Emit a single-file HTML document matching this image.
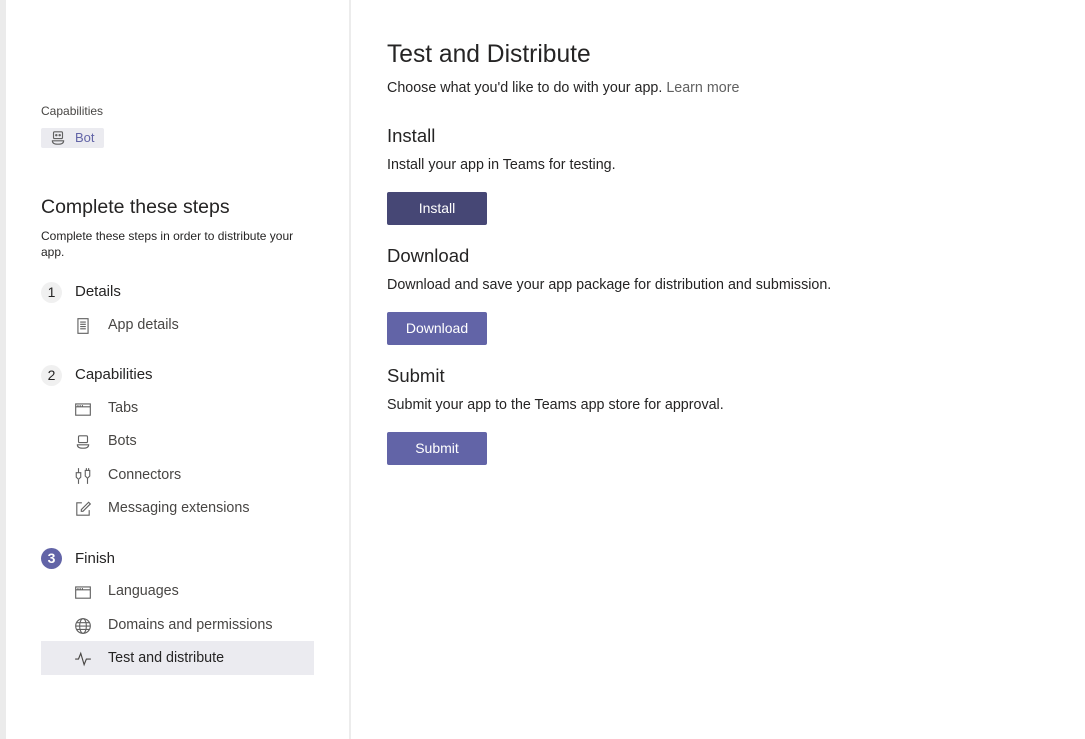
<!DOCTYPE html>
<html><head><style>
*{margin:0;padding:0;box-sizing:border-box}
body{width:1085px;height:739px;background:#fff;font-family:"Liberation Sans",sans-serif;color:#252424;position:relative;overflow:hidden}
.strip{position:absolute;left:0;top:0;width:6px;height:739px;background:#ebebeb}
.side{position:absolute;left:6px;top:0;width:345px;height:739px;border-right:2px solid #ececec}
.a{position:absolute;white-space:nowrap}
.ic{position:absolute;width:18px;height:18px}
.btn{position:absolute;left:387px;width:100px;height:33px;color:#fff;font-size:14px;text-align:center;line-height:33px;border-radius:2px;background:#6264a7}
.num{position:absolute;left:41px;width:21px;height:21px;border-radius:50%;background:#f0f0f0;font-size:14px;text-align:center;line-height:21px;color:#252424}
.sub{font-size:14.3px;color:#484644}
.m{font-size:14.3px}
</style></head><body>
<div class="strip"></div><div class="side"></div>
<div class="a" style="left:41px;top:104px;font-size:12px;color:#484644">Capabilities</div>
<div class="a" style="left:41px;top:128px;width:63px;height:20px;background:#ebebf0;border-radius:2px"></div>
<svg class="ic" style="left:49px;top:129px" viewBox="0 0 16 16" fill="none" stroke="#616161" stroke-width="1"><rect x="4" y="2.5" width="8" height="6" rx="1"/><circle cx="6.5" cy="5.5" r=".6"/><circle cx="9.5" cy="5.5" r=".6"/><path d="M2.5 10.5h11M3 10.5c0 2 2 3 5 3s5-1 5-3"/></svg>
<div class="a" style="left:75px;top:130px;font-size:13px;color:#6264a7">Bot</div>
<div class="a" style="left:41px;top:196px;font-size:19.5px;color:#252424">Complete these steps</div>
<div class="a" style="left:41px;top:228px;font-size:12px;line-height:16px;color:#252424;white-space:normal;width:280px">Complete these steps in order to distribute your<br>app.</div>
<div class="num" style="top:282px">1</div><div class="a" style="left:75px;top:283px;font-size:15px">Details</div>
<svg class="ic" style="left:74px;top:317px" viewBox="0 0 16 16" fill="none" stroke="#616161"><rect x="3.5" y="1.5" width="9" height="13"/><path d="M5.5 4.5h5M5.5 6.5h5M5.5 8.5h5M5.5 10.5h5"/></svg>
<div class="a sub" style="left:108px;top:317px">App details</div>
<div class="num" style="top:365px">2</div><div class="a" style="left:75px;top:366px;font-size:15px">Capabilities</div>
<svg class="ic" style="left:74px;top:400px" viewBox="0 0 16 16" fill="none" stroke="#616161"><rect x="1.5" y="3.5" width="13" height="10"/><path d="M1.5 6h13M3.5 4.5v1M5.5 4.5v1M7.5 4.5v1"/></svg>
<div class="a sub" style="left:108px;top:400px">Tabs</div>
<svg class="ic" style="left:74px;top:433px" viewBox="0 0 16 16" fill="none" stroke="#616161"><rect x="4" y="2.5" width="8" height="6" rx="1"/><path d="M2.5 10.5h11M3 10.5c0 2 2 3 5 3s5-1 5-3"/></svg>
<div class="a sub" style="left:108px;top:433px">Bots</div>
<svg class="ic" style="left:74px;top:467px" viewBox="0 0 16 16" fill="none" stroke="#616161"><path d="M4 1v4M2 5h4v4l-2 2-2-2zM4 11v4M10 3h4v5l-2 2-2-2zM11 1v2M13 1v2M12 10v5"/></svg>
<div class="a sub" style="left:108px;top:467px">Connectors</div>
<svg class="ic" style="left:74px;top:500px" viewBox="0 0 16 16" fill="none" stroke="#616161"><path d="M7 2.5H2.5v11h11V9M13 2l1.5 1.5L8 10H6.5V8.5z"/></svg>
<div class="a sub" style="left:108px;top:500px">Messaging extensions</div>
<div class="num" style="top:548px;background:#6264a7;color:#fff;font-weight:bold">3</div><div class="a" style="left:75px;top:550px;font-size:15px">Finish</div>
<svg class="ic" style="left:74px;top:583px" viewBox="0 0 16 16" fill="none" stroke="#616161"><rect x="1.5" y="3.5" width="13" height="10"/><path d="M1.5 6h13M3.5 4.5v1M5.5 4.5v1M7.5 4.5v1"/></svg>
<div class="a sub" style="left:108px;top:583px">Languages</div>
<svg class="ic" style="left:74px;top:617px" viewBox="0 0 16 16" fill="none" stroke="#616161"><circle cx="8" cy="8" r="6.5"/><ellipse cx="8" cy="8" rx="3" ry="6.5"/><path d="M1.5 8h13M2.5 5h11M2.5 11h11"/></svg>
<div class="a sub" style="left:108px;top:617px">Domains and permissions</div>
<div class="a" style="left:41px;top:641px;width:273px;height:34px;background:#ebebf0"></div>
<svg class="ic" style="left:74px;top:650px" viewBox="0 0 16 16" fill="none" stroke="#484644"><path d="M1 8h3l2-5 3 10 2-5h4"/></svg>
<div class="a" style="left:108px;top:650px;font-size:14.3px;color:#252424">Test and distribute</div>

<div class="a" style="left:387px;top:41px;font-size:24.6px">Test and Distribute</div>
<div class="a m" style="left:387px;top:80px">Choose what you'd like to do with your app. <span style="color:#616161">Learn more</span></div>
<div class="a" style="left:387px;top:125px;font-size:18.5px">Install</div>
<div class="a m" style="left:387px;top:157px">Install your app in Teams for testing.</div>
<div class="btn" style="top:192px;background:#464775">Install</div>
<div class="a" style="left:387px;top:245px;font-size:18.5px">Download</div>
<div class="a m" style="left:387px;top:277px">Download and save your app package for distribution and submission.</div>
<div class="btn" style="top:312px">Download</div>
<div class="a" style="left:387px;top:365px;font-size:18.5px">Submit</div>
<div class="a m" style="left:387px;top:397px">Submit your app to the Teams app store for approval.</div>
<div class="btn" style="top:432px">Submit</div>
</body></html>
